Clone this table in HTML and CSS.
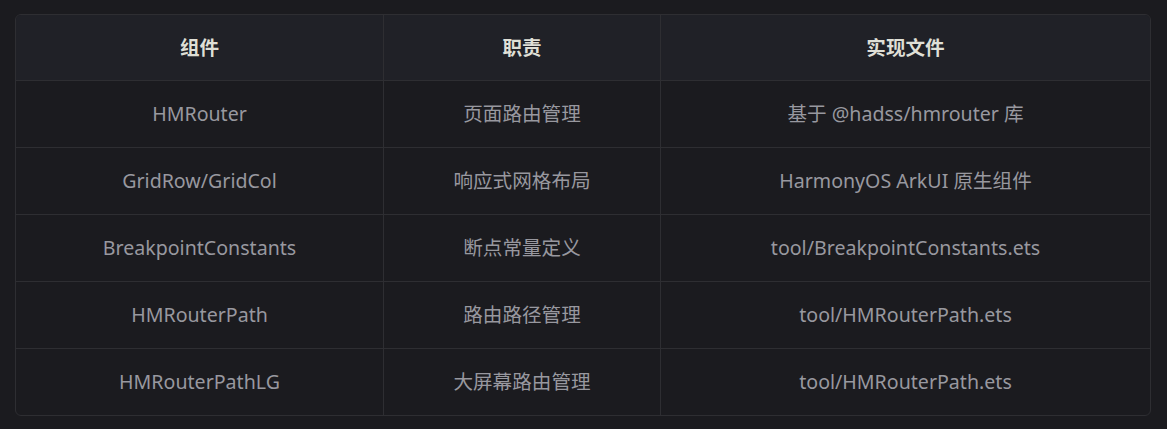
FILE: index.html
```html
<!DOCTYPE html>
<html lang="zh-CN">
<head>
<meta charset="utf-8">
<link rel="stylesheet" href="styles.css">
</head>
<body>
<div class="wrap">
  <table class="tbl">
    <thead>
      <tr><th class="c1">组件</th><th class="c2">职责</th><th class="c3">实现文件</th></tr>
    </thead>
    <tbody>
      <tr><td>HMRouter</td><td>页面路由管理</td><td>基于 @hadss/hmrouter 库</td></tr>
      <tr><td>GridRow/GridCol</td><td>响应式网格布局</td><td>HarmonyOS ArkUI 原生组件</td></tr>
      <tr><td>BreakpointConstants</td><td>断点常量定义</td><td>tool/BreakpointConstants.ets</td></tr>
      <tr><td>HMRouterPath</td><td>路由路径管理</td><td>tool/HMRouterPath.ets</td></tr>
      <tr><td>HMRouterPathLG</td><td>大屏幕路由管理</td><td>tool/HMRouterPath.ets</td></tr>
    </tbody>
  </table>
</div>
</body>
</html>
```

FILE: styles.css
```css
html, body {
  margin: 0;
  padding: 0;
  background: #1b1b1f;
}
body {
  font-family: "Noto Sans", "Noto Sans CJK SC", sans-serif;
}
.wrap {
  padding: 14px 16px 0 15px;
}
.tbl {
  width: 1136px;
  border-collapse: separate;
  border-spacing: 0;
  border: 1px solid #2e2e32;
  border-radius: 6px;
  overflow: hidden;
  table-layout: fixed;
}
.tbl th, .tbl td {
  text-align: center;
  vertical-align: middle;
  font-size: 19.6px;
  line-height: 26px;
  padding: 0;
}
.tbl th {
  height: 65px;
  background: #202127;
  color: #dfdfd6;
  font-weight: 700;
  border-bottom: 1px solid #2e2e32;
}
.tbl td {
  height: 66px;
  color: #98989f;
  border-bottom: 1px solid #2e2e32;
}
.tbl tbody tr:last-child td {
  border-bottom: none;
}
.tbl th + th, .tbl td + td {
  border-left: 1px solid #2e2e32;
}
.c1 { width: 367px; }
.c2 { width: 276px; }
```
